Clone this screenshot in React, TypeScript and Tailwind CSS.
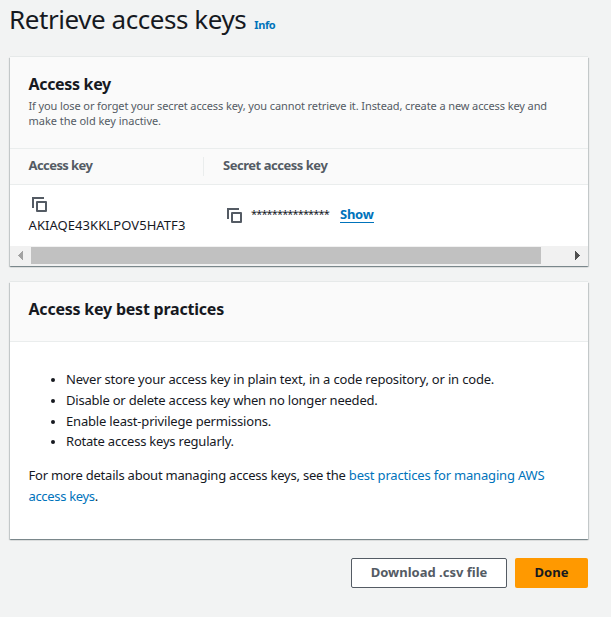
import type { ReactNode } from "react";

function CopyIcon() {
  return (
    <svg width="15" height="15" viewBox="0 0 15 15" fill="none" stroke="#545b64" strokeWidth="2" className="block shrink-0">
      <path d="M1 11V1h11" />
      <path d="M5 5h9v9H5z" strokeLinejoin="round" />
    </svg>
  );
}

function Panel({ children, className }: { children: ReactNode; className: string }) {
  return (
    <section
      className={`ml-[10px] w-[578px] bg-white shadow-[0_1px_1px_0_rgba(0,28,36,0.3),1px_1px_1px_0_rgba(0,28,36,0.15),-1px_1px_1px_0_rgba(0,28,36,0.15),0_-1px_0_0_#e6e9e9] ${className}`}
    >
      {children}
    </section>
  );
}

const practices = [
  { text: "Never store your access key in plain text, in a code repository, or in code.", row: "h-[21px]", className: "tracking-[-0.185px]" },
  { text: "Disable or delete access key when no longer needed.", row: "h-[21px]", className: "tracking-[-0.215px]" },
  { text: "Enable least-privilege permissions.", row: "h-[20px]", className: "tracking-[-0.18px]" },
  { text: "Rotate access keys regularly.", row: "h-[20px]", className: "tracking-[-0.21px]" },
];

export default function App() {
  return (
    <main className="h-[617px] w-[611px] overflow-hidden whitespace-nowrap bg-[#f2f3f3] font-['Noto_Sans',sans-serif] text-[13px] text-[#16191f]">
      <header className="flex h-[57px] items-baseline pl-[9px]">
        <h1 className="text-[26px] leading-[38px] tracking-[-0.44px]">Retrieve access keys</h1>
        <a className="ml-[8px] text-[11px] font-bold tracking-[-0.4px] text-[#0073bb]">Info</a>
      </header>

      <Panel className="h-[209px]">
        <div className="h-[91px] bg-[#fafafa] pl-[18.5px] pt-[16px]">
          <h2 className="text-[16px] font-bold leading-[22px] tracking-[-0.33px]">Access key</h2>
          <p className="mt-[3px] text-[11px] leading-[15px] text-[#545b64]">
            <span className="tracking-[-0.105px]">If you lose or forget your secret access key, you cannot retrieve it. Instead, create a new access key and</span>
            <br />
            <span className="tracking-[-0.03px]">make the old key inactive.</span>
          </p>
        </div>
        <div className="flex h-[37px] items-center border-y border-[#eaeded] bg-[#fafafa] font-bold text-[#545b64]">
          <div className="w-[194px] border-r border-[#eaeded] pl-[18.5px] leading-[19px]">
            <span className="relative top-[-1px] tracking-[-0.57px]">Access key</span>
          </div>
          <div className="pl-[19px] leading-[19px]">
            <span className="relative top-[-1px] tracking-[-0.47px]">Secret access key</span>
          </div>
        </div>
        <div className="flex h-[61px]">
          <div className="w-[194px] pl-[18.5px] pt-[12px]">
            <div className="pl-[3.5px]">
              <CopyIcon />
            </div>
            <div className="mt-[3px] leading-[20px] tracking-[0.07px]">AKIAQE43KKLPOV5HATF3</div>
          </div>
          <div className="flex pl-[23px] pt-[23px]">
            <CopyIcon />
            <span className="ml-[9px] w-[78px] text-[11px] leading-[12px] tracking-[-0.87px]">***************</span>
            <a className="ml-[11px] h-[15px] w-[34px] border-b border-[#0073bb] font-bold leading-[13px] tracking-[-0.25px] text-[#0073bb]">Show</a>
          </div>
        </div>
        <div className="flex h-[20px] items-start bg-[#f1f1f1] pt-px">
          <svg width="21" height="17" shapeRendering="crispEdges">
            <path d="M13 4v9L8 8.5z" fill="#a3a3a3" />
          </svg>
          <div className="h-[17px] w-[510px] bg-[#c1c1c1]" />
          <svg width="47" height="17" shapeRendering="crispEdges" className="ml-auto">
            <path d="M34 4v9l5-4.5z" fill="#505050" />
          </svg>
        </div>
      </Panel>

      <Panel className="mt-[16px] h-[257px]">
        <div className="h-[60px] border-b border-[#eaeded] bg-[#fafafa] pl-[18.5px] pt-[16px]">
          <h2 className="text-[16px] font-bold leading-[22px] tracking-[-0.22px]">Access key best practices</h2>
        </div>
        <ul className="pt-[27px]">
          {practices.map((item) => (
            <li key={item.text} className={`flex items-start pl-[41px] leading-[20px] ${item.row}`}>
              <span className="mr-[11px] mt-[9px] size-[4px] rounded-full bg-[#16191f]" />
              <span className={item.className}>{item.text}</span>
            </li>
          ))}
        </ul>
        <p className="pl-[18.5px] pt-[14px] leading-[21px]">
          <span className="tracking-[-0.22px]">For more details about managing access keys, see the </span>
          <a className="tracking-[-0.18px] text-[#0073bb]">best practices for managing AWS</a>
          <br />
          <a className="tracking-[-0.33px] text-[#0073bb]">access keys</a>.
        </p>
      </Panel>

      <footer className="mt-[19px] flex w-[588px] justify-end gap-[8px] font-bold">
        <button className="h-[30px] w-[156px] rounded-[2px] border border-[#545b64] bg-white text-[#545b64]">
          <span>Download .csv file</span>
        </button>
        <button className="h-[30px] w-[73px] rounded-[2px] bg-[#ff9900]">
          <span>Done</span>
        </button>
      </footer>
    </main>
  );
}
